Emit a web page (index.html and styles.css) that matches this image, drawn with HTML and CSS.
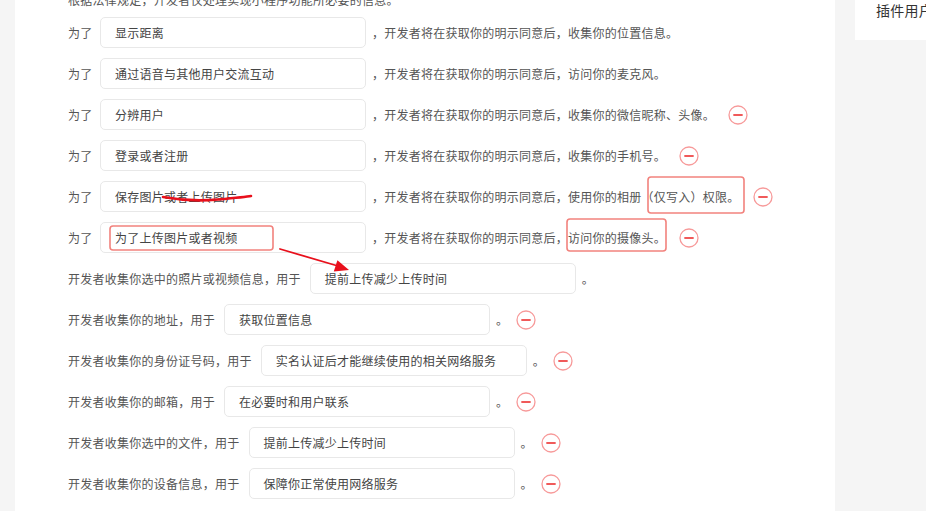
FILE: index.html
```html
<!DOCTYPE html>
<html lang="zh-CN">

<head>
    <meta charset="UTF-8">
    <meta name="viewport" content="width=device-width, initial-scale=1.0">
    <title>用户隐私保护指引</title>
    <link rel="stylesheet" href="styles.css">
</head>

<body>
    <div class="page">
        <div class="main">
            <p class="intro">根据法律规定，开发者仅处理实现小程序功能所必要的信息。</p>

            <div class="row">
                <span class="label">为了</span>
                <div class="field">显示距离</div>
                <span class="desc">，开发者将在获取你的明示同意后，收集你的位置信息。</span>
            </div>
            <div class="row">
                <span class="label">为了</span>
                <div class="field">通过语音与其他用户交流互动</div>
                <span class="desc">，开发者将在获取你的明示同意后，访问你的麦克风。</span>
            </div>
            <div class="row">
                <span class="label">为了</span>
                <div class="field">分辨用户</div>
                <span class="desc">，开发者将在获取你的明示同意后，收集你的微信昵称、头像。</span>
                <span class="remove"><svg width="20" height="20" viewBox="0 0 20 20"><circle cx="10" cy="10" r="9" /><line x1="6" y1="10" x2="14" y2="10" /></svg></span>
            </div>
            <div class="row">
                <span class="label">为了</span>
                <div class="field">登录或者注册</div>
                <span class="desc">，开发者将在获取你的明示同意后，收集你的手机号。</span>
                <span class="remove"><svg width="20" height="20" viewBox="0 0 20 20"><circle cx="10" cy="10" r="9" /><line x1="6" y1="10" x2="14" y2="10" /></svg></span>
            </div>
            <div class="row">
                <span class="label">为了</span>
                <div class="field">保存图片或者上传图片</div>
                <span class="desc">，开发者将在获取你的明示同意后，使用你的相册（仅写入）权限。</span>
                <span class="remove"><svg width="20" height="20" viewBox="0 0 20 20"><circle cx="10" cy="10" r="9" /><line x1="6" y1="10" x2="14" y2="10" /></svg></span>
            </div>
            <div class="row">
                <span class="label">为了</span>
                <div class="field">为了上传图片或者视频</div>
                <span class="desc">，开发者将在获取你的明示同意后，访问你的摄像头。</span>
                <span class="remove"><svg width="20" height="20" viewBox="0 0 20 20"><circle cx="10" cy="10" r="9" /><line x1="6" y1="10" x2="14" y2="10" /></svg></span>
            </div>

            <div class="row">
                <span class="label wide">开发者收集你选中的照片或视频信息，用于</span>
                <div class="field">提前上传减少上传时间</div>
                <span class="end">。</span>
            </div>
            <div class="row">
                <span class="label wide">开发者收集你的地址，用于</span>
                <div class="field">获取位置信息</div>
                <span class="end">。</span>
                <span class="remove near"><svg width="20" height="20" viewBox="0 0 20 20"><circle cx="10" cy="10" r="9" /><line x1="6" y1="10" x2="14" y2="10" /></svg></span>
            </div>
            <div class="row">
                <span class="label wide">开发者收集你的身份证号码，用于</span>
                <div class="field">实名认证后才能继续使用的相关网络服务</div>
                <span class="end">。</span>
                <span class="remove near"><svg width="20" height="20" viewBox="0 0 20 20"><circle cx="10" cy="10" r="9" /><line x1="6" y1="10" x2="14" y2="10" /></svg></span>
            </div>
            <div class="row">
                <span class="label wide">开发者收集你的邮箱，用于</span>
                <div class="field">在必要时和用户联系</div>
                <span class="end">。</span>
                <span class="remove near"><svg width="20" height="20" viewBox="0 0 20 20"><circle cx="10" cy="10" r="9" /><line x1="6" y1="10" x2="14" y2="10" /></svg></span>
            </div>
            <div class="row">
                <span class="label wide">开发者收集你选中的文件，用于</span>
                <div class="field">提前上传减少上传时间</div>
                <span class="end">。</span>
                <span class="remove near"><svg width="20" height="20" viewBox="0 0 20 20"><circle cx="10" cy="10" r="9" /><line x1="6" y1="10" x2="14" y2="10" /></svg></span>
            </div>
            <div class="row">
                <span class="label wide">开发者收集你的设备信息，用于</span>
                <div class="field">保障你正常使用网络服务</div>
                <span class="end">。</span>
                <span class="remove near"><svg width="20" height="20" viewBox="0 0 20 20"><circle cx="10" cy="10" r="9" /><line x1="6" y1="10" x2="14" y2="10" /></svg></span>
            </div>
        </div>

        <div class="side">
            <div class="side-card">插件用户信息</div>
        </div>
    </div>

    <!-- hand-drawn review marks on top of the page -->
    <svg class="marks" width="926" height="511" viewBox="0 0 926 511">
        <rect class="box" x="648" y="177" width="96" height="36" rx="3" />
        <rect class="box" x="567" y="219" width="99" height="32" rx="3" />
        <rect class="box" x="110" y="226" width="163" height="24" rx="3" />
        <path class="pen" d="M163 197 Q 190 202 218 199.5 T 251 196" />
        <path class="pen thin" d="M280 249 L 338 266" />
        <polygon class="head" points="349,270 337.4,260.2 333.8,271.6" />
    </svg>
</body>

</html>
```

FILE: styles.css
```css
* {
    margin: 0;
    padding: 0;
    box-sizing: border-box;
}

html,
body {
    height: 100%;
    overflow: hidden;
}

body {
    background-color: #f5f5f5;
    font-family: "Noto Sans CJK SC", "Noto Sans", sans-serif;
    font-size: 12px;
    letter-spacing: 0.25px;
    color: #555;
}

.page {
    display: flex;
    gap: 20px;
    padding-left: 15px;
    margin-top: -12px;
    height: calc(100% + 12px);
}

.main {
    width: 820px;
    flex-shrink: 0;
    background-color: #fff;
    padding: 2px 0 0 53px;
}

.intro {
    line-height: 20px;
    margin-bottom: 7px;
}

.row {
    display: flex;
    align-items: center;
    height: 31px;
    margin-bottom: 10px;
    white-space: nowrap;
}

.label {
    margin-right: 7.5px;
}

.label.wide {
    margin-right: 9px;
}

.field {
    width: 266px;
    height: 31px;
    line-height: 29px;
    padding-left: 14px;
    border: 1px solid #e8e8e8;
    border-radius: 5px;
    color: #444;
}

.desc {
    margin-left: 6px;
}

.end {
    margin-left: 6px;
}

.remove {
    display: flex;
    margin-left: 13px;
}

.remove.near {
    margin-left: 8px;
}

.remove circle {
    fill: none;
    stroke: #f79a9a;
    stroke-width: 1.3;
}

.remove line {
    stroke: #f05a5a;
    stroke-width: 1.8;
    stroke-linecap: round;
}

.side {
    width: 200px;
    flex-shrink: 0;
}

.side-card {
    background-color: #fff;
    padding: 12px 21px 20px;
    font-size: 14px;
    line-height: 20px;
    color: #333;
    white-space: nowrap;
}

.marks {
    position: absolute;
    top: 0;
    left: 0;
    pointer-events: none;
}

.box {
    fill: none;
    stroke: #f2827d;
    stroke-width: 1.6;
}

.pen {
    fill: none;
    stroke: #e8101c;
    stroke-width: 2.6;
    stroke-linecap: round;
}

.pen.thin {
    stroke-width: 1.8;
}

.head {
    fill: #e8101c;
}
```
